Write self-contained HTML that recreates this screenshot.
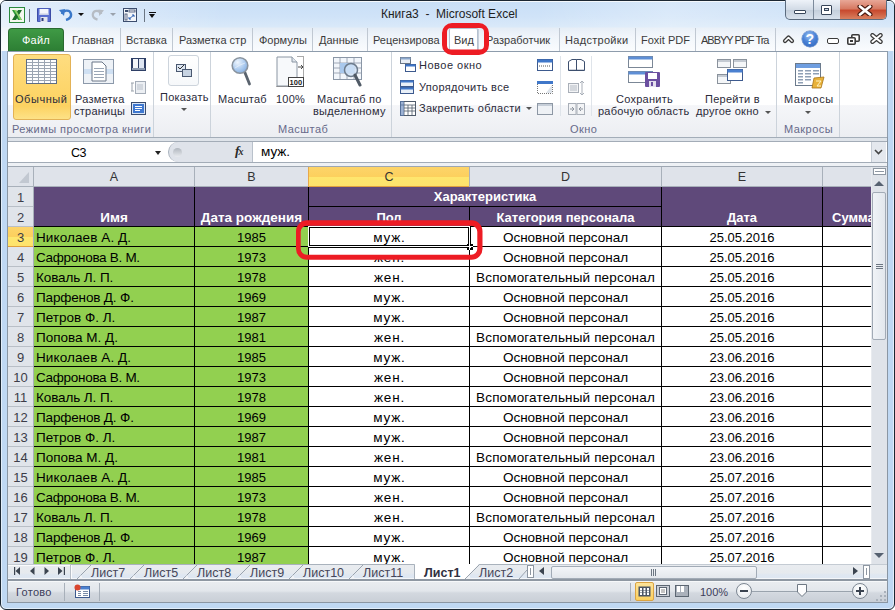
<!DOCTYPE html><html><head><meta charset="utf-8"><style>
*{box-sizing:border-box}
html,body{margin:0;padding:0}
body{width:895px;height:610px;overflow:hidden;position:relative;font-family:"Liberation Sans",sans-serif;background:#fff}
.a{position:absolute}
.t{position:absolute;white-space:nowrap;line-height:1}
#frame{left:0;top:0;width:895px;height:610px;background:#bfd8f3;border:1px solid #1c2733;border-radius:6px 6px 6px 6px;box-shadow:inset 1px 0 0 #e2eefa,inset -1px 0 0 #e2eefa,inset 0 -1px 0 #e2eefa}
#titlebg{left:1px;top:1px;width:893px;height:50px;border-radius:5px 5px 0 0;border-top:1px solid #f4f8fc;background:linear-gradient(90deg,rgba(255,255,255,0.45) 0%,rgba(255,255,255,0) 25%,rgba(255,255,255,0) 60%,rgba(255,255,255,0.25) 75%,rgba(255,255,255,0) 100%),linear-gradient(#c9dff7 0%,#d0e3f8 30%,#d9e9f9 50%,#e5edf6 54%,#eff4fa 70%,#fafcfe 100%)}
.tab{font-size:11px;color:#3b3b3b;top:35px}
.tsep{top:28px;width:1px;height:23px;background:#c0c8d2}
.rb{font-size:11px;letter-spacing:0.25px;color:#2b2b3a}
.glab{font-size:11px;letter-spacing:0.45px;color:#676a8a;top:123.7px}
.gsep{top:52px;width:1px;height:85px;background:#ccd3db}
.c{font-size:13.5px;color:#000;top:0}
.rowh{left:8px;width:25px;height:20px;background:#e0e4ea;border-bottom:1px solid #b9bfc7}
</style></head><body>
<div id="frame" class="a"></div>
<div id="titlebg" class="a"></div>
<div class="t" style="left:381px;top:8px;font-size:12px;color:#1e1e1e">Книга3&nbsp; -&nbsp; Microsoft Excel</div>
<svg class="a" style="left:9px;top:7px" width="17" height="17" viewBox="0 0 17 17">
<rect x="0.5" y="0.5" width="15" height="15" fill="#f4f8ef" stroke="#2b8a3e"/>
<path d="M3 3 L7 3 L13 13 L9 13 Z" fill="#2f9a3a"/><path d="M13 3 L9 3 L3 13 L7 13 Z" fill="#1e6e2a"/>
<path d="M5 3 L7 3 L13 13 L11 13 Z" fill="#8fd16a"/></svg>
<div class="a" style="left:29px;top:9px;width:1px;height:13px;background:#6b7683"></div>
<svg class="a" style="left:37px;top:8px" width="14" height="14" viewBox="0 0 14 14">
<rect x="0" y="0" width="14" height="14" rx="1" fill="#3c4ca6"/><rect x="1" y="0.5" width="12" height="13" fill="#5a6fd0"/><rect x="2.5" y="1" width="9" height="6" fill="#f4f6fb"/><rect x="2.5" y="5.5" width="9" height="1.5" fill="#c9d0e6"/>
<rect x="3.5" y="9" width="7" height="5" fill="#e3e6ee"/><rect x="4.5" y="10" width="2" height="3" fill="#2c3a7a"/></svg>
<svg class="a" style="left:59px;top:8px" width="14" height="13" viewBox="0 0 14 13">
<path d="M3 6 C4 2,11 1,12 6 C12.5 9,10 11,7 12" stroke="#3a78c9" stroke-width="2.4" fill="none"/>
<path d="M0 2 L5 8 L6 1 Z" fill="#3a78c9"/></svg>
<div class="a" style="left:78px;top:13px;width:0;height:0;border-left:3px solid transparent;border-right:3px solid transparent;border-top:3px solid #111"></div>
<svg class="a" style="left:91px;top:8px" width="13" height="13" viewBox="0 0 14 13">
<path d="M11 6 C10 2,3 1,2 6 C1.5 9,4 11,7 12" stroke="#b6bcc4" stroke-width="2.4" fill="none"/>
<path d="M14 2 L9 8 L8 1 Z" fill="#b6bcc4"/></svg>
<div class="a" style="left:110px;top:13px;width:0;height:0;border-left:3px solid transparent;border-right:3px solid transparent;border-top:3px solid #9aa2ac"></div>
<svg class="a" style="left:123px;top:8px" width="14" height="14" viewBox="0 0 14 14">
<rect x="0.5" y="0.5" width="13" height="13" fill="#f3f6fa" stroke="#3c4d6e"/>
<rect x="2" y="2" width="3" height="2" fill="#3c4d6e"/><rect x="6" y="2" width="6" height="2" fill="none" stroke="#3c4d6e" stroke-width="0.8"/>
<rect x="2" y="6" width="2" height="6" fill="none" stroke="#3c4d6e" stroke-width="0.8"/>
<path d="M6 11 L11 7 M9 7 L11 7 L11 9 M6 9 L6 11 L8 11" stroke="#2f62b5" stroke-width="1" fill="none"/></svg>
<div class="a" style="left:144px;top:9px;width:1px;height:13px;background:#6b7683"></div>
<div class="a" style="left:149px;top:12px;width:7px;height:1px;background:#111"></div>
<div class="a" style="left:149px;top:14px;width:0;height:0;border-left:3.5px solid transparent;border-right:3.5px solid transparent;border-top:4px solid #111"></div>
<div class="a" style="left:785px;top:0;width:102px;height:20px;border:1px solid #5b6b7e;border-top:none;border-radius:0 0 5px 5px;overflow:hidden;background:linear-gradient(#eef3f9,#d2dbe6 50%,#c3cedb 51%,#d8e1ec)">
<div class="a" style="left:27px;top:0;width:1px;height:19px;background:#7c8a9b"></div>
<div class="a" style="left:54px;top:0;width:48px;height:19px;background:linear-gradient(#e8a797,#d77a63 45%,#c84a2f 55%,#d9805f)"></div>
</div>
<div class="a" style="left:794px;top:10px;width:12px;height:4px;background:#fff;border:1px solid #38465a;border-radius:1px"></div>
<div class="a" style="left:821px;top:5px;width:11px;height:10px;background:#fff;border:1px solid #38465a;border-radius:1px"></div>
<div class="a" style="left:824px;top:8px;width:5px;height:3px;background:#cfd8e3;border:1px solid #38465a"></div>
<svg class="a" style="left:857px;top:5px" width="16" height="11" viewBox="0 0 16 11"><path d="M3 1.5 L13 9.5 M13 1.5 L3 9.5" stroke="#4a1a10" stroke-width="5" stroke-linecap="round"/><path d="M3 1.5 L13 9.5 M13 1.5 L3 9.5" stroke="#fff" stroke-width="2.8" stroke-linecap="round"/></svg>
<div class="a" style="left:8px;top:28px;width:56px;height:24px;border-radius:4px 4px 0 0;background:linear-gradient(#3f9a45,#2c7d33);border:1px solid #2a6a30;border-bottom:none"></div>
<div class="t" style="left:22px;top:35px;font-size:11px;letter-spacing:0.2px;color:#fff">Файл</div>
<div class="t tab" style="left:72px">Главная</div>
<div class="a tsep" style="left:120px"></div>
<div class="t tab" style="left:126px">Вставка</div>
<div class="a tsep" style="left:172px"></div>
<div class="t tab" style="left:179px">Разметка стр</div>
<div class="a tsep" style="left:252px"></div>
<div class="t tab" style="left:259px">Формулы</div>
<div class="a tsep" style="left:312px"></div>
<div class="t tab" style="left:319px">Данные</div>
<div class="a tsep" style="left:367px"></div>
<div class="t tab" style="left:373px">Рецензирова</div>
<div class="t tab" style="left:454px">Вид</div>
<div class="t tab" style="left:486px">Разработчик</div>
<div class="a tsep" style="left:559px"></div>
<div class="t tab" style="left:565px;letter-spacing:0.3px">Надстройки</div>
<div class="a tsep" style="left:635px"></div>
<div class="t tab" style="left:641px">Foxit PDF</div>
<div class="a tsep" style="left:695px"></div>
<div class="a" style="left:701px;top:30px;width:70px;height:20px;overflow:hidden"><div class="t tab" style="left:0;top:5px;letter-spacing:-1px">ABBYY PDF Tra</div></div>
<div class="a tsep" style="left:775px"></div>
<div class="a" style="left:449px;top:28px;width:29px;height:24px;background:#fff;border:1px solid #b6c2d0;border-bottom:none;border-radius:2px 2px 0 0"></div>
<div class="t tab" style="left:454px">Вид</div>
<div class="a" style="left:478px;top:29px;width:1px;height:22px;background:#c6cfda"></div>
<svg class="a" style="left:782px;top:33px" width="13" height="12" viewBox="0 0 13 12"><path d="M3 8 L6.5 4.5 L10 8" stroke="#3a3a3a" stroke-width="4.2" stroke-linejoin="round" stroke-linecap="round" fill="none"/><path d="M3 8 L6.5 4.5 L10 8" stroke="#fff" stroke-width="1.6" stroke-linejoin="round" stroke-linecap="round" fill="none"/></svg>
<div class="a" style="left:802px;top:31px;width:16px;height:16px;border-radius:50%;background:radial-gradient(circle at 45% 30%,#9cc1f2 0%,#4a82d6 45%,#2f62b8 100%);box-shadow:0 0 0 0.5px #5b7fb8"></div>
<div class="t" style="left:805.5px;top:32px;font-size:14px;font-weight:bold;color:#fff">?</div>
<div class="a" style="left:827px;top:37.5px;width:11.5px;height:6px;border:1.6px solid #3a3a3a;border-radius:2px;background:#fff"></div>
<svg class="a" style="left:847px;top:34px" width="13" height="11" viewBox="0 0 13 11"><rect x="4.8" y="0.8" width="7.4" height="6.4" rx="1" fill="#fff" stroke="#3a3a3a" stroke-width="1.6"/><rect x="0.8" y="3.8" width="7.4" height="6.4" rx="1" fill="#fff" stroke="#3a3a3a" stroke-width="1.6"/><rect x="3" y="6" width="3" height="2" fill="#3a3a3a"/></svg>
<svg class="a" style="left:870px;top:33px" width="13" height="11" viewBox="0 0 13 11"><path d="M2.5 2.2 L10.5 8.8 M10.5 2.2 L2.5 8.8" stroke="#3a3a3a" stroke-width="4.4" stroke-linecap="round"/><path d="M2.5 2.2 L10.5 8.8 M10.5 2.2 L2.5 8.8" stroke="#fff" stroke-width="2" stroke-linecap="round"/></svg>
<div class="a" style="left:7px;top:51px;width:881px;height:87px;border:1px solid #8e9cac;border-bottom-color:#a3adb8;background:linear-gradient(#ffffff 0%,#ffffff 62%,#f5f6f9 63%,#eceef2 100%)"></div>
<div class="a gsep" style="left:153px"></div>
<div class="a gsep" style="left:210px"></div>
<div class="a gsep" style="left:391px"></div>
<div class="a gsep" style="left:776px"></div>
<div class="a gsep" style="left:839px"></div>
<div class="a" style="left:560px;top:56px;width:1px;height:60px;background:#dfe4ea"></div>
<div class="a" style="left:591px;top:56px;width:1px;height:60px;background:#dfe4ea"></div>
<div class="a" style="left:13px;top:54px;width:58px;height:66px;border:1px solid #e3b256;border-radius:3px;background:linear-gradient(#fedd80 0%,#fdd66c 50%,#fcd262 80%,#fde287 100%)"></div>
<svg class="a" style="left:26px;top:59px" width="31" height="25" viewBox="0 0 31 25"><rect x="0" y="0" width="31" height="25" fill="#9ba5b3"/><g fill="#fdfeff"><rect x="1" y="1" width="5" height="2"/><rect x="1" y="4" width="5" height="2"/><rect x="1" y="7" width="5" height="2"/><rect x="1" y="10" width="5" height="2"/><rect x="1" y="13" width="5" height="2"/><rect x="1" y="16" width="5" height="2"/><rect x="1" y="19" width="5" height="2"/><rect x="1" y="22" width="5" height="2"/><rect x="7" y="1" width="5" height="2"/><rect x="7" y="4" width="5" height="2"/><rect x="7" y="7" width="5" height="2"/><rect x="7" y="10" width="5" height="2"/><rect x="7" y="13" width="5" height="2"/><rect x="7" y="16" width="5" height="2"/><rect x="7" y="19" width="5" height="2"/><rect x="7" y="22" width="5" height="2"/><rect x="13" y="1" width="5" height="2"/><rect x="13" y="4" width="5" height="2"/><rect x="13" y="7" width="5" height="2"/><rect x="13" y="10" width="5" height="2"/><rect x="13" y="13" width="5" height="2"/><rect x="13" y="16" width="5" height="2"/><rect x="13" y="19" width="5" height="2"/><rect x="13" y="22" width="5" height="2"/><rect x="19" y="1" width="5" height="2"/><rect x="19" y="4" width="5" height="2"/><rect x="19" y="7" width="5" height="2"/><rect x="19" y="10" width="5" height="2"/><rect x="19" y="13" width="5" height="2"/><rect x="19" y="16" width="5" height="2"/><rect x="19" y="19" width="5" height="2"/><rect x="19" y="22" width="5" height="2"/><rect x="25" y="1" width="5" height="2"/><rect x="25" y="4" width="5" height="2"/><rect x="25" y="7" width="5" height="2"/><rect x="25" y="10" width="5" height="2"/><rect x="25" y="13" width="5" height="2"/><rect x="25" y="16" width="5" height="2"/><rect x="25" y="19" width="5" height="2"/><rect x="25" y="22" width="5" height="2"/></g><rect x="0.5" y="0.5" width="30" height="24" fill="none" stroke="#5d6d84"/></svg>
<div class="t rb" style="left:15px;top:94px;letter-spacing:0.55px">Обычный</div>
<svg class="a" style="left:83px;top:59px" width="31" height="25" viewBox="0 0 31 25"><rect x="0.5" y="0.5" width="30" height="24" fill="#eef2f7" stroke="#8c99aa"/><rect x="1" y="10" width="29" height="5" fill="#cfe0f3"/>
<path d="M9 3 L19 3 L23 7 L23 22 L9 22 Z" fill="#fff" stroke="#6b7788"/><g fill="#9aa6b6"><rect x="11" y="9" width="10" height="1"/><rect x="11" y="12" width="10" height="1"/><rect x="11" y="15" width="10" height="1"/><rect x="11" y="18" width="10" height="1"/></g></svg>
<div class="t rb" style="left:75px;top:94px">Разметка</div>
<div class="t rb" style="left:74px;top:106px">страницы</div>
<svg class="a" style="left:131px;top:58px" width="15" height="13" viewBox="0 0 15 13"><rect x="0" y="0" width="15" height="13" fill="#2e3f66"/><rect x="2" y="1" width="5" height="9" fill="#f4f6fa"/><rect x="8" y="1" width="5" height="9" fill="#dfe6f2"/><rect x="1" y="10" width="13" height="2" fill="#8c9ab0"/></svg>
<svg class="a" style="left:131px;top:79px" width="15" height="16" viewBox="0 0 15 16"><rect x="4.5" y="2.5" width="10" height="12" fill="#eceff3" stroke="#a5adb8"/><rect x="6" y="5" width="6" height="6" fill="#d2d7de"/><path d="M1 4 L1 12 M0 4 L3 4 M0 12 L3 12" stroke="#9aa2ac"/></svg>
<svg class="a" style="left:131px;top:102px" width="15" height="13" viewBox="0 0 15 13"><rect x="0.5" y="0.5" width="14" height="12" fill="#d9e6f6" stroke="#3a4c6e"/><rect x="2" y="2" width="11" height="9" fill="#3f78d0"/><g fill="#fff"><rect x="4" y="4" width="7" height="1"/><rect x="4" y="6" width="7" height="1"/><rect x="4" y="8" width="5" height="1"/></g></svg>
<div class="t glab" style="left:12px">Режимы просмотра книги</div>
<div class="a" style="left:168px;top:55px;width:31px;height:31px;border:1px solid #cdd4dc;border-radius:3px;background:linear-gradient(#fff,#f6f8fa)"></div>
<svg class="a" style="left:176px;top:63px" width="16" height="15" viewBox="0 0 16 15"><rect x="0.5" y="1.5" width="9" height="7" fill="#dde6f2" stroke="#4a5870"/><rect x="6.5" y="6.5" width="9" height="7" fill="#c7d3e2" stroke="#4a5870"/><path d="M2 4 L4 6 L8 2" stroke="#333" fill="none"/></svg>
<div class="t rb" style="left:160px;top:92px">Показать</div>
<div class="a" style="left:181px;top:108px;width:0;height:0;border-left:3px solid transparent;border-right:3px solid transparent;border-top:3px solid #555"></div>
<svg class="a" style="left:230px;top:56px" width="22" height="30" viewBox="0 0 22 30"><defs><radialGradient id="lg" cx="0.35" cy="0.3" r="0.8"><stop offset="0" stop-color="#eef5fd"/><stop offset="0.6" stop-color="#a9c9ee"/><stop offset="1" stop-color="#7ea7dc"/></radialGradient></defs><path d="M14.5 15.5 L19.5 28" stroke="#5a636e" stroke-width="2.8" stroke-linecap="round"/><circle cx="10" cy="9.5" r="7.8" fill="url(#lg)" stroke="#8a949f" stroke-width="1.6"/><path d="M5 12 Q9 9 15 7" stroke="#ffffff" stroke-opacity="0.6" stroke-width="0.8" fill="none"/></svg>
<div class="t rb" style="left:218px;top:94px">Масштаб</div>
<svg class="a" style="left:276px;top:56px" width="29" height="31" viewBox="0 0 29 31"><path d="M1 1 L16 1 L21 6 L21 30 L1 30 Z" fill="#f7f9fb" stroke="#8b96a3"/><path d="M16 1 L16 6 L21 6" fill="#dfe5ec" stroke="#8b96a3"/><path d="M21.5 0.5 H27.5 V30.5 H0.5" stroke="#555" stroke-dasharray="1 1" fill="none"/><path d="M22 11 L27 11 M25 9 L27 11 L25 13" stroke="#333" fill="none" stroke-width="0.9"/><rect x="12.5" y="21.5" width="15" height="9" fill="#fff" stroke="#444"/><text x="13.6" y="29" font-size="7.5" font-weight="bold" font-family="Liberation Sans" fill="#222">100</text></svg>
<div class="t rb" style="left:276px;top:94px">100%</div>
<svg class="a" style="left:333px;top:57px" width="31" height="30" viewBox="0 0 31 30"><rect x="0.5" y="0.5" width="28" height="22" fill="#f2f6fb" stroke="#8a96a6"/><g stroke="#8a96a6" stroke-width="0.8"><path d="M7 1 V22 M14 1 V22 M21 1 V22 M1 6 H28 M1 11 H28 M1 16 H28"/></g><rect x="7" y="6" width="14" height="10" fill="#a9c8ec"/><circle cx="18" cy="13" r="6.5" fill="#cfe2f7" fill-opacity="0.8" stroke="#6d7b8b" stroke-width="1.5"/><path d="M22 18 L27 28" stroke="#505a66" stroke-width="3" stroke-linecap="round"/></svg>
<div class="t rb" style="left:317px;top:94px">Масштаб по</div>
<div class="t rb" style="left:313px;top:106px">выделенному</div>
<div class="t glab" style="left:278px">Масштаб</div>
<svg class="a" style="left:400px;top:57px" width="16" height="15" viewBox="0 0 16 15"><rect x="0.5" y="0.5" width="10" height="6" fill="#e9eef5" stroke="#6a7686"/><rect x="0.5" y="0.5" width="10" height="2" fill="#8aa6cc"/><rect x="5.5" y="7.5" width="10" height="7" fill="#fff" stroke="#3d5a8e"/><rect x="5.5" y="7.5" width="10" height="2" fill="#3f77c9"/></svg>
<div class="t rb" style="left:419px;top:60px;letter-spacing:0.5px">Новое окно</div>
<svg class="a" style="left:400px;top:80px" width="14" height="14" viewBox="0 0 14 14"><rect x="0.5" y="0.5" width="13" height="6" fill="#e9f0f8" stroke="#3d5a8e"/><rect x="0.5" y="0.5" width="13" height="2" fill="#3f77c9"/><rect x="0.5" y="7.5" width="13" height="6" fill="#e9f0f8" stroke="#3d5a8e"/><rect x="0.5" y="7.5" width="13" height="2" fill="#3f77c9"/></svg>
<div class="t rb" style="left:419px;top:82px;letter-spacing:0.3px">Упорядочить все</div>
<svg class="a" style="left:400px;top:101px" width="16" height="15" viewBox="0 0 16 15"><rect x="0.5" y="0.5" width="15" height="14" fill="#fff" stroke="#4f5b6b"/><path d="M4 0 V15 M0 4 H16 M8 4 V15 M12 4 V15 M4 7 H16 M4 10 H16" stroke="#4f5b6b" stroke-width="0.8"/><rect x="0" y="0" width="4" height="15" fill="#5b7fb8" fill-opacity="0.6"/></svg>
<div class="t rb" style="left:419px;top:103px;letter-spacing:0.3px">Закрепить области</div>
<div class="a" style="left:526px;top:107px;width:0;height:0;border-left:3px solid transparent;border-right:3px solid transparent;border-top:3px solid #555"></div>
<svg class="a" style="left:537px;top:59px" width="16" height="12" viewBox="0 0 16 12"><rect x="0.5" y="0.5" width="15" height="11" fill="#fff" stroke="#3d5a8e"/><rect x="0.5" y="0.5" width="15" height="3" fill="#3f77c9"/><path d="M2 7 H14" stroke="#555" stroke-dasharray="1 1"/></svg>
<svg class="a" style="left:537px;top:81px" width="16" height="13" viewBox="0 0 16 13"><rect x="0" y="0" width="16" height="3" fill="#3f77c9"/><path d="M0.5 3 V12.5 H15.5 V3" stroke="#777" stroke-dasharray="1 1" fill="none"/><path d="M9 12 L15 4 L15 12 Z" fill="#dde3ea"/></svg>
<svg class="a" style="left:537px;top:103px" width="16" height="12" viewBox="0 0 16 12"><rect x="0.5" y="0.5" width="15" height="11" fill="#eef1f5" stroke="#8d97a4"/><rect x="1" y="1" width="14" height="2" fill="#c6ced8"/></svg>
<svg class="a" style="left:568px;top:59px" width="17" height="12" viewBox="0 0 17 12"><path d="M0.5 2.5 L4 0.5 L8.5 0.5 L8.5 11.5 L0.5 11.5 Z" fill="#fff" stroke="#3d4f6e"/><path d="M8.5 0.5 L13 0.5 L16.5 2.5 L16.5 11.5 L8.5 11.5 Z" fill="#fff" stroke="#3d4f6e"/><path d="M1 11.5 H16" stroke="#3d4f6e" stroke-width="1.5"/></svg>
<svg class="a" style="left:568px;top:81px" width="17" height="14" viewBox="0 0 17 14"><rect x="0.5" y="2.5" width="10" height="9" fill="#f3f4f6" stroke="#a9afb8"/><path d="M2 5 H9 M2 7 H9 M2 9 H9" stroke="#b5bbc4"/><path d="M14 0 V14 M12 2 L14 0 L16 2 M12 12 L14 14 L16 12" stroke="#a9afb8" fill="none"/></svg>
<svg class="a" style="left:568px;top:103px" width="17" height="12" viewBox="0 0 17 12"><rect x="0.5" y="0.5" width="7.5" height="11" fill="#f3f4f6" stroke="#a9afb8"/><rect x="9" y="0.5" width="7.5" height="11" fill="#f3f4f6" stroke="#a9afb8"/><path d="M2 6 H6 M4 4 L6 6 L4 8 M15 6 H11 M13 4 L11 6 L13 8" stroke="#8d949e" fill="none"/></svg>
<svg class="a" style="left:628px;top:56px" width="33" height="31" viewBox="0 0 33 31"><rect x="0.5" y="0.5" width="24" height="11" fill="#fff" stroke="#7b8796"/><rect x="0.5" y="0.5" width="24" height="3" fill="#5f8fd6"/><rect x="0.5" y="15.5" width="24" height="11" fill="#fff" stroke="#7b8796"/><rect x="0.5" y="15.5" width="24" height="3" fill="#5f8fd6"/><rect x="17" y="16" width="15" height="15" rx="1" fill="#6b4fa0"/><rect x="20" y="17" width="9" height="6" fill="#fff"/><rect x="21" y="25" width="7" height="6" fill="#e4e0ee"/><rect x="23" y="26" width="2" height="4" fill="#6b4fa0"/></svg>
<div class="t rb" style="left:616px;top:94px">Сохранить</div>
<div class="t rb" style="left:598px;top:106px">рабочую область</div>
<svg class="a" style="left:717px;top:59px" width="31" height="26" viewBox="0 0 31 26"><g fill="#f4f6f8" stroke="#8a929c"><rect x="0.5" y="0.5" width="13" height="8"/><rect x="16.5" y="0.5" width="13" height="8"/><rect x="0.5" y="15.5" width="13" height="9"/></g><g fill="#c4cad2"><rect x="1" y="1" width="12" height="2"/><rect x="17" y="1" width="12" height="2"/><rect x="1" y="16" width="12" height="2"/></g><rect x="10.5" y="10.5" width="15" height="11" fill="#fff" stroke="#3d5a8e"/><rect x="10.5" y="10.5" width="15" height="3" fill="#4a80d0"/></svg>
<div class="t rb" style="left:705px;top:94px">Перейти в</div>
<div class="t rb" style="left:696px;top:106px">другое окно</div>
<div class="a" style="left:765px;top:111px;width:0;height:0;border-left:3px solid transparent;border-right:3px solid transparent;border-top:3px solid #555"></div>
<div class="t glab" style="left:570px">Окно</div>
<svg class="a" style="left:795px;top:63px" width="30" height="26" viewBox="0 0 30 26"><rect x="0.5" y="0.5" width="25" height="22" fill="#fff" stroke="#6b7a8c"/><rect x="1" y="1" width="24" height="4" fill="#6f9ee0"/><g fill="#8fa0b5"><rect x="3" y="7" width="5" height="1.5"/><rect x="10" y="7" width="6" height="1.5"/><rect x="18" y="7" width="6" height="1.5"/><rect x="3" y="10" width="5" height="1.5"/><rect x="10" y="10" width="6" height="1.5"/><rect x="18" y="10" width="6" height="1.5"/><rect x="3" y="13" width="5" height="1.5"/><rect x="10" y="13" width="6" height="1.5"/><rect x="3" y="16" width="5" height="1.5"/><rect x="10" y="16" width="6" height="1.5"/><rect x="3" y="19" width="5" height="1.5"/></g><path d="M19 15 L29 14 L26 25 L17 25 Z" fill="#e8b23a" stroke="#a87418" stroke-width="0.8"/><path d="M21 18 L26 18 L22 23 L26 23" stroke="#fff3c4" fill="none"/></svg>
<div class="t rb" style="left:784px;top:94px;letter-spacing:0.55px">Макросы</div>
<div class="a" style="left:805px;top:111px;width:0;height:0;border-left:3px solid transparent;border-right:3px solid transparent;border-top:3px solid #555"></div>
<div class="t glab" style="left:784px">Макросы</div>
<div class="a" style="left:8px;top:138px;width:879px;height:29px;background:#dfe4ea"></div>
<div class="a" style="left:8px;top:141px;width:879px;height:22px;background:#fff;border-top:1px solid #a3acb7;border-bottom:1px solid #a3acb7"></div>
<div class="a" style="left:8px;top:163px;width:879px;height:3px;background:#eef1f5"></div>
<div class="a" style="left:8px;top:166px;width:879px;height:1px;background:#9ea7b2"></div>
<div class="t" style="left:71px;top:147px;font-size:12.5px;letter-spacing:-0.6px;color:#000">C3</div>
<div class="a" style="left:155px;top:151px;width:0;height:0;border-left:3.5px solid transparent;border-right:3.5px solid transparent;border-top:4px solid #222"></div>
<div class="a" style="left:168px;top:142px;width:85px;height:20px;background:#dfe3ea;border-left:1px solid #a9b2bd;border-right:1px solid #b9c1cb;border-radius:10px 0 0 10px"></div>
<div class="a" style="left:173px;top:148px;width:9px;height:9px;border-radius:50%;background:linear-gradient(#b0b6be,#e8ebef)"></div>
<div class="t" style="left:235px;top:144px;font-size:13.5px;font-style:italic;font-weight:bold;font-family:'Liberation Serif',serif;color:#2a2a2a">f<span style="font-size:10px;margin-left:-1px">x</span></div>
<div class="t" style="left:261px;top:145px;font-size:13.5px;color:#000">муж.</div>
<div class="a" style="left:871px;top:142px;width:15px;height:20px;background:#e4e8ee;border-left:1px solid #c5ccd5"></div>
<svg class="a" style="left:874px;top:149px" width="9" height="6" viewBox="0 0 9 6"><path d="M1 1 L4.5 4.5 L8 1" stroke="#444" stroke-width="1.6" fill="none"/></svg>
<div class="a" style="left:8px;top:167px;width:863px;height:397px;background:#fff;overflow:hidden"><div class="a" style="left:0;top:0;width:863px;height:20px;background:#dfe3ea;border-bottom:1px solid #a8b0ba"></div>
<svg class="a" style="left:11px;top:5px" width="10" height="11" viewBox="0 0 10 11"><path d="M10 0 L10 11 L0 11 Z" fill="#c2c8d1"/></svg>
<div class="a" style="left:25px;top:0;width:1px;height:19px;background:#a8b0ba"></div>
<div class="a" style="left:186px;top:0;width:1px;height:19px;background:#a8b0ba"></div>
<div class="a" style="left:300px;top:0;width:1px;height:19px;background:#a8b0ba"></div>
<div class="a" style="left:461px;top:0;width:1px;height:19px;background:#a8b0ba"></div>
<div class="a" style="left:653px;top:0;width:1px;height:19px;background:#a8b0ba"></div>
<div class="a" style="left:814px;top:0;width:1px;height:19px;background:#a8b0ba"></div>
<div class="t" style="left:26px;top:4px;width:160px;text-align:center;font-size:12.5px;color:#333">A</div>
<div class="t" style="left:187px;top:4px;width:113px;text-align:center;font-size:12.5px;color:#333">B</div>
<div class="a" style="left:300px;top:0;width:161px;height:20px;background:linear-gradient(#fdd469 0%,#fcd05e 50%,#fee66e 51%,#fee36c 100%);border-left:1px solid #e7a84a;border-bottom:1px solid #e0a13f"></div>
<div class="t" style="left:301px;top:4px;width:160px;text-align:center;font-size:12.5px;color:#333">C</div>
<div class="t" style="left:462px;top:4px;width:191px;text-align:center;font-size:12.5px;color:#333">D</div>
<div class="t" style="left:654px;top:4px;width:160px;text-align:center;font-size:12.5px;color:#333">E</div>
<div class="t" style="left:815px;top:4px;width:77px;text-align:center;font-size:12.5px;color:#333"></div>
<div class="a rowh" style="left:0;top:20px;"></div>
<div class="t" style="left:0;top:24px;width:25px;text-align:center;font-size:13px;color:#3c3c48">1</div>
<div class="a rowh" style="left:0;top:40px;"></div>
<div class="t" style="left:0;top:44px;width:25px;text-align:center;font-size:13px;color:#3c3c48">2</div>
<div class="a rowh" style="left:0;top:60px;background:linear-gradient(#fdd469 0%,#fcd05e 50%,#fee66e 51%,#fee36c 100%);border-bottom:1px solid #e0a13f;"></div>
<div class="t" style="left:0;top:64px;width:25px;text-align:center;font-size:13px;color:#3c3c48">3</div>
<div class="a rowh" style="left:0;top:80px;"></div>
<div class="t" style="left:0;top:84px;width:25px;text-align:center;font-size:13px;color:#3c3c48">4</div>
<div class="a rowh" style="left:0;top:100px;"></div>
<div class="t" style="left:0;top:104px;width:25px;text-align:center;font-size:13px;color:#3c3c48">5</div>
<div class="a rowh" style="left:0;top:120px;"></div>
<div class="t" style="left:0;top:124px;width:25px;text-align:center;font-size:13px;color:#3c3c48">6</div>
<div class="a rowh" style="left:0;top:140px;"></div>
<div class="t" style="left:0;top:144px;width:25px;text-align:center;font-size:13px;color:#3c3c48">7</div>
<div class="a rowh" style="left:0;top:160px;"></div>
<div class="t" style="left:0;top:164px;width:25px;text-align:center;font-size:13px;color:#3c3c48">8</div>
<div class="a rowh" style="left:0;top:180px;"></div>
<div class="t" style="left:0;top:184px;width:25px;text-align:center;font-size:13px;color:#3c3c48">9</div>
<div class="a rowh" style="left:0;top:200px;"></div>
<div class="t" style="left:0;top:204px;width:25px;text-align:center;font-size:13px;color:#3c3c48">10</div>
<div class="a rowh" style="left:0;top:220px;"></div>
<div class="t" style="left:0;top:224px;width:25px;text-align:center;font-size:13px;color:#3c3c48">11</div>
<div class="a rowh" style="left:0;top:240px;"></div>
<div class="t" style="left:0;top:244px;width:25px;text-align:center;font-size:13px;color:#3c3c48">12</div>
<div class="a rowh" style="left:0;top:260px;"></div>
<div class="t" style="left:0;top:264px;width:25px;text-align:center;font-size:13px;color:#3c3c48">13</div>
<div class="a rowh" style="left:0;top:280px;"></div>
<div class="t" style="left:0;top:284px;width:25px;text-align:center;font-size:13px;color:#3c3c48">14</div>
<div class="a rowh" style="left:0;top:300px;"></div>
<div class="t" style="left:0;top:304px;width:25px;text-align:center;font-size:13px;color:#3c3c48">15</div>
<div class="a rowh" style="left:0;top:320px;"></div>
<div class="t" style="left:0;top:324px;width:25px;text-align:center;font-size:13px;color:#3c3c48">16</div>
<div class="a rowh" style="left:0;top:340px;"></div>
<div class="t" style="left:0;top:344px;width:25px;text-align:center;font-size:13px;color:#3c3c48">17</div>
<div class="a rowh" style="left:0;top:360px;"></div>
<div class="t" style="left:0;top:364px;width:25px;text-align:center;font-size:13px;color:#3c3c48">18</div>
<div class="a rowh" style="left:0;top:380px;"></div>
<div class="t" style="left:0;top:384px;width:25px;text-align:center;font-size:13px;color:#3c3c48">19</div>
<div class="a rowh" style="left:0;top:400px;"></div>
<div class="t" style="left:0;top:404px;width:25px;text-align:center;font-size:13px;color:#3c3c48">20</div>
<div class="a" style="left:25px;top:20px;width:1px;height:400px;background:#a8b0ba"></div>
<div class="a" style="left:26px;top:20px;width:900px;height:40px;background:#5f497a"></div>
<div class="a" style="left:26px;top:60px;width:274px;height:400px;background:#92d050"></div>
<div class="a" style="left:186px;top:20px;width:1px;height:413px;background:#000"></div>
<div class="a" style="left:300px;top:20px;width:1px;height:413px;background:#000"></div>
<div class="a" style="left:461px;top:40px;width:1px;height:393px;background:#000"></div>
<div class="a" style="left:653px;top:20px;width:1px;height:413px;background:#000"></div>
<div class="a" style="left:814px;top:20px;width:1px;height:413px;background:#000"></div>
<div class="a" style="left:300px;top:39px;width:353px;height:1px;background:#000"></div>
<div class="a" style="left:26px;top:59px;width:866px;height:1px;background:#000"></div>
<div class="a" style="left:26px;top:79px;width:866px;height:1px;background:#000"></div>
<div class="a" style="left:26px;top:99px;width:866px;height:1px;background:#000"></div>
<div class="a" style="left:26px;top:119px;width:866px;height:1px;background:#000"></div>
<div class="a" style="left:26px;top:139px;width:866px;height:1px;background:#000"></div>
<div class="a" style="left:26px;top:159px;width:866px;height:1px;background:#000"></div>
<div class="a" style="left:26px;top:179px;width:866px;height:1px;background:#000"></div>
<div class="a" style="left:26px;top:199px;width:866px;height:1px;background:#000"></div>
<div class="a" style="left:26px;top:219px;width:866px;height:1px;background:#000"></div>
<div class="a" style="left:26px;top:239px;width:866px;height:1px;background:#000"></div>
<div class="a" style="left:26px;top:259px;width:866px;height:1px;background:#000"></div>
<div class="a" style="left:26px;top:279px;width:866px;height:1px;background:#000"></div>
<div class="a" style="left:26px;top:299px;width:866px;height:1px;background:#000"></div>
<div class="a" style="left:26px;top:319px;width:866px;height:1px;background:#000"></div>
<div class="a" style="left:26px;top:339px;width:866px;height:1px;background:#000"></div>
<div class="a" style="left:26px;top:359px;width:866px;height:1px;background:#000"></div>
<div class="a" style="left:26px;top:379px;width:866px;height:1px;background:#000"></div>
<div class="a" style="left:26px;top:399px;width:866px;height:1px;background:#000"></div>
<div class="a" style="left:26px;top:419px;width:866px;height:1px;background:#000"></div>
<div class="t" style="left:26px;top:44px;width:160px;text-align:center;font-size:13.5px;font-weight:bold;color:#fff">Имя</div>
<div class="t" style="left:187px;top:44px;width:113px;text-align:center;font-size:13.5px;font-weight:bold;color:#fff">Дата рождения</div>
<div class="t" style="left:301px;top:23px;width:352px;text-align:center;font-size:13px;font-weight:bold;color:#fff">Характеристика</div>
<div class="t" style="left:301px;top:44px;width:160px;text-align:center;font-size:13px;font-weight:bold;color:#fff">Пол</div>
<div class="t" style="left:462px;top:44px;width:191px;text-align:center;font-size:13px;font-weight:bold;color:#fff">Категория персонала</div>
<div class="t" style="left:654px;top:44px;width:160px;text-align:center;font-size:13px;font-weight:bold;color:#fff">Дата</div>
<div class="t" style="left:824px;top:44px;font-size:13px;font-weight:bold;color:#fff">Сумма</div>
<div class="t" style="left:28px;top:64px;font-size:13.5px;letter-spacing:0.1px;color:#000">Николаев А. Д.</div>
<div class="t" style="left:187px;top:64px;width:113px;text-align:center;font-size:13px;color:#000">1985</div>
<div class="t" style="left:301px;top:64px;width:161px;text-align:center;font-size:13.5px;letter-spacing:0.8px;color:#000">муж.</div>
<div class="t" style="left:462px;top:64px;width:191px;text-align:center;font-size:13.5px;letter-spacing:0;color:#000">Основной персонал</div>
<div class="t" style="left:654px;top:64px;width:160px;text-align:center;font-size:13px;color:#000">25.05.2016</div>
<div class="t" style="left:28px;top:84px;font-size:13.5px;letter-spacing:-0.3px;color:#000">Сафронова В. М.</div>
<div class="t" style="left:187px;top:84px;width:113px;text-align:center;font-size:13px;color:#000">1973</div>
<div class="t" style="left:301px;top:84px;width:161px;text-align:center;font-size:13.5px;letter-spacing:0.8px;color:#000">жен.</div>
<div class="t" style="left:462px;top:84px;width:191px;text-align:center;font-size:13.5px;letter-spacing:0;color:#000">Основной персонал</div>
<div class="t" style="left:654px;top:84px;width:160px;text-align:center;font-size:13px;color:#000">25.05.2016</div>
<div class="t" style="left:28px;top:104px;font-size:13.5px;letter-spacing:-0.1px;color:#000">Коваль Л. П.</div>
<div class="t" style="left:187px;top:104px;width:113px;text-align:center;font-size:13px;color:#000">1978</div>
<div class="t" style="left:301px;top:104px;width:161px;text-align:center;font-size:13.5px;letter-spacing:0.8px;color:#000">жен.</div>
<div class="t" style="left:462px;top:104px;width:191px;text-align:center;font-size:13.5px;letter-spacing:0.15px;color:#000">Вспомогательный персонал</div>
<div class="t" style="left:654px;top:104px;width:160px;text-align:center;font-size:13px;color:#000">25.05.2016</div>
<div class="t" style="left:28px;top:124px;font-size:13.5px;letter-spacing:-0.15px;color:#000">Парфенов Д. Ф.</div>
<div class="t" style="left:187px;top:124px;width:113px;text-align:center;font-size:13px;color:#000">1969</div>
<div class="t" style="left:301px;top:124px;width:161px;text-align:center;font-size:13.5px;letter-spacing:0.8px;color:#000">муж.</div>
<div class="t" style="left:462px;top:124px;width:191px;text-align:center;font-size:13.5px;letter-spacing:0;color:#000">Основной персонал</div>
<div class="t" style="left:654px;top:124px;width:160px;text-align:center;font-size:13px;color:#000">25.05.2016</div>
<div class="t" style="left:28px;top:144px;font-size:13.5px;letter-spacing:0px;color:#000">Петров Ф. Л.</div>
<div class="t" style="left:187px;top:144px;width:113px;text-align:center;font-size:13px;color:#000">1987</div>
<div class="t" style="left:301px;top:144px;width:161px;text-align:center;font-size:13.5px;letter-spacing:0.8px;color:#000">муж.</div>
<div class="t" style="left:462px;top:144px;width:191px;text-align:center;font-size:13.5px;letter-spacing:0;color:#000">Основной персонал</div>
<div class="t" style="left:654px;top:144px;width:160px;text-align:center;font-size:13px;color:#000">25.05.2016</div>
<div class="t" style="left:28px;top:164px;font-size:13.5px;letter-spacing:0px;color:#000">Попова М. Д.</div>
<div class="t" style="left:187px;top:164px;width:113px;text-align:center;font-size:13px;color:#000">1981</div>
<div class="t" style="left:301px;top:164px;width:161px;text-align:center;font-size:13.5px;letter-spacing:0.8px;color:#000">жен.</div>
<div class="t" style="left:462px;top:164px;width:191px;text-align:center;font-size:13.5px;letter-spacing:0.15px;color:#000">Вспомогательный персонал</div>
<div class="t" style="left:654px;top:164px;width:160px;text-align:center;font-size:13px;color:#000">25.05.2016</div>
<div class="t" style="left:28px;top:184px;font-size:13.5px;letter-spacing:0.1px;color:#000">Николаев А. Д.</div>
<div class="t" style="left:187px;top:184px;width:113px;text-align:center;font-size:13px;color:#000">1985</div>
<div class="t" style="left:301px;top:184px;width:161px;text-align:center;font-size:13.5px;letter-spacing:0.8px;color:#000">муж.</div>
<div class="t" style="left:462px;top:184px;width:191px;text-align:center;font-size:13.5px;letter-spacing:0;color:#000">Основной персонал</div>
<div class="t" style="left:654px;top:184px;width:160px;text-align:center;font-size:13px;color:#000">23.06.2016</div>
<div class="t" style="left:28px;top:204px;font-size:13.5px;letter-spacing:-0.3px;color:#000">Сафронова В. М.</div>
<div class="t" style="left:187px;top:204px;width:113px;text-align:center;font-size:13px;color:#000">1973</div>
<div class="t" style="left:301px;top:204px;width:161px;text-align:center;font-size:13.5px;letter-spacing:0.8px;color:#000">жен.</div>
<div class="t" style="left:462px;top:204px;width:191px;text-align:center;font-size:13.5px;letter-spacing:0;color:#000">Основной персонал</div>
<div class="t" style="left:654px;top:204px;width:160px;text-align:center;font-size:13px;color:#000">23.06.2016</div>
<div class="t" style="left:28px;top:224px;font-size:13.5px;letter-spacing:-0.1px;color:#000">Коваль Л. П.</div>
<div class="t" style="left:187px;top:224px;width:113px;text-align:center;font-size:13px;color:#000">1978</div>
<div class="t" style="left:301px;top:224px;width:161px;text-align:center;font-size:13.5px;letter-spacing:0.8px;color:#000">жен.</div>
<div class="t" style="left:462px;top:224px;width:191px;text-align:center;font-size:13.5px;letter-spacing:0.15px;color:#000">Вспомогательный персонал</div>
<div class="t" style="left:654px;top:224px;width:160px;text-align:center;font-size:13px;color:#000">23.06.2016</div>
<div class="t" style="left:28px;top:244px;font-size:13.5px;letter-spacing:-0.15px;color:#000">Парфенов Д. Ф.</div>
<div class="t" style="left:187px;top:244px;width:113px;text-align:center;font-size:13px;color:#000">1969</div>
<div class="t" style="left:301px;top:244px;width:161px;text-align:center;font-size:13.5px;letter-spacing:0.8px;color:#000">муж.</div>
<div class="t" style="left:462px;top:244px;width:191px;text-align:center;font-size:13.5px;letter-spacing:0;color:#000">Основной персонал</div>
<div class="t" style="left:654px;top:244px;width:160px;text-align:center;font-size:13px;color:#000">23.06.2016</div>
<div class="t" style="left:28px;top:264px;font-size:13.5px;letter-spacing:0px;color:#000">Петров Ф. Л.</div>
<div class="t" style="left:187px;top:264px;width:113px;text-align:center;font-size:13px;color:#000">1987</div>
<div class="t" style="left:301px;top:264px;width:161px;text-align:center;font-size:13.5px;letter-spacing:0.8px;color:#000">муж.</div>
<div class="t" style="left:462px;top:264px;width:191px;text-align:center;font-size:13.5px;letter-spacing:0;color:#000">Основной персонал</div>
<div class="t" style="left:654px;top:264px;width:160px;text-align:center;font-size:13px;color:#000">23.06.2016</div>
<div class="t" style="left:28px;top:284px;font-size:13.5px;letter-spacing:0px;color:#000">Попова М. Д.</div>
<div class="t" style="left:187px;top:284px;width:113px;text-align:center;font-size:13px;color:#000">1981</div>
<div class="t" style="left:301px;top:284px;width:161px;text-align:center;font-size:13.5px;letter-spacing:0.8px;color:#000">жен.</div>
<div class="t" style="left:462px;top:284px;width:191px;text-align:center;font-size:13.5px;letter-spacing:0.15px;color:#000">Вспомогательный персонал</div>
<div class="t" style="left:654px;top:284px;width:160px;text-align:center;font-size:13px;color:#000">23.06.2016</div>
<div class="t" style="left:28px;top:304px;font-size:13.5px;letter-spacing:0.1px;color:#000">Николаев А. Д.</div>
<div class="t" style="left:187px;top:304px;width:113px;text-align:center;font-size:13px;color:#000">1985</div>
<div class="t" style="left:301px;top:304px;width:161px;text-align:center;font-size:13.5px;letter-spacing:0.8px;color:#000">муж.</div>
<div class="t" style="left:462px;top:304px;width:191px;text-align:center;font-size:13.5px;letter-spacing:0;color:#000">Основной персонал</div>
<div class="t" style="left:654px;top:304px;width:160px;text-align:center;font-size:13px;color:#000">25.07.2016</div>
<div class="t" style="left:28px;top:324px;font-size:13.5px;letter-spacing:-0.3px;color:#000">Сафронова В. М.</div>
<div class="t" style="left:187px;top:324px;width:113px;text-align:center;font-size:13px;color:#000">1973</div>
<div class="t" style="left:301px;top:324px;width:161px;text-align:center;font-size:13.5px;letter-spacing:0.8px;color:#000">жен.</div>
<div class="t" style="left:462px;top:324px;width:191px;text-align:center;font-size:13.5px;letter-spacing:0;color:#000">Основной персонал</div>
<div class="t" style="left:654px;top:324px;width:160px;text-align:center;font-size:13px;color:#000">25.07.2016</div>
<div class="t" style="left:28px;top:344px;font-size:13.5px;letter-spacing:-0.1px;color:#000">Коваль Л. П.</div>
<div class="t" style="left:187px;top:344px;width:113px;text-align:center;font-size:13px;color:#000">1978</div>
<div class="t" style="left:301px;top:344px;width:161px;text-align:center;font-size:13.5px;letter-spacing:0.8px;color:#000">жен.</div>
<div class="t" style="left:462px;top:344px;width:191px;text-align:center;font-size:13.5px;letter-spacing:0.15px;color:#000">Вспомогательный персонал</div>
<div class="t" style="left:654px;top:344px;width:160px;text-align:center;font-size:13px;color:#000">25.07.2016</div>
<div class="t" style="left:28px;top:364px;font-size:13.5px;letter-spacing:-0.15px;color:#000">Парфенов Д. Ф.</div>
<div class="t" style="left:187px;top:364px;width:113px;text-align:center;font-size:13px;color:#000">1969</div>
<div class="t" style="left:301px;top:364px;width:161px;text-align:center;font-size:13.5px;letter-spacing:0.8px;color:#000">муж.</div>
<div class="t" style="left:462px;top:364px;width:191px;text-align:center;font-size:13.5px;letter-spacing:0;color:#000">Основной персонал</div>
<div class="t" style="left:654px;top:364px;width:160px;text-align:center;font-size:13px;color:#000">25.07.2016</div>
<div class="t" style="left:28px;top:384px;font-size:13.5px;letter-spacing:0px;color:#000">Петров Ф. Л.</div>
<div class="t" style="left:187px;top:384px;width:113px;text-align:center;font-size:13px;color:#000">1987</div>
<div class="t" style="left:301px;top:384px;width:161px;text-align:center;font-size:13.5px;letter-spacing:0.8px;color:#000">муж.</div>
<div class="t" style="left:462px;top:384px;width:191px;text-align:center;font-size:13.5px;letter-spacing:0;color:#000">Основной персонал</div>
<div class="t" style="left:654px;top:384px;width:160px;text-align:center;font-size:13px;color:#000">25.07.2016</div>
<div class="a" style="left:300px;top:59px;width:163px;height:1px;background:#fff"></div>
<div class="a" style="left:300px;top:59px;width:1px;height:22px;background:#fff"></div>
<div class="a" style="left:301px;top:60px;width:160px;height:19px;border:1px solid #000"></div>
<div class="a" style="left:461px;top:59px;width:1px;height:21px;background:#fff"></div>
<div class="a" style="left:300px;top:79px;width:162px;height:1px;background:#fff"></div>
<div class="a" style="left:462px;top:59px;width:1px;height:22px;background:#000"></div>
<div class="a" style="left:300px;top:80px;width:163px;height:1px;background:#000"></div>
<svg class="a" style="left:459px;top:77px" width="6" height="6" viewBox="0 0 6 6"><rect x="0" y="0" width="6" height="6" fill="#000"/><rect x="2" y="0" width="1" height="6" fill="#fff"/><rect x="0" y="2" width="6" height="1" fill="#fff"/><rect x="2" y="2" width="2" height="2" fill="#fff"/></svg></div>
<div class="a" style="left:871px;top:167px;width:16px;height:397px;background:#dfe3e9;border-left:1px solid #e8ebef"></div>
<div class="a" style="left:873px;top:168px;width:13px;height:7px;background:#fff;border:1px solid #8e97a2"></div>
<div class="a" style="left:875px;top:171px;width:9px;height:1px;background:#8e97a2"></div>
<div class="a" style="left:874px;top:181px;width:0;height:0;border-left:5px solid transparent;border-right:5px solid transparent;border-bottom:5px solid #566170"></div>
<div class="a" style="left:872px;top:192px;width:14px;height:148px;border:1px solid #a2abb6;border-radius:2px;background:linear-gradient(90deg,#f0f3f7,#e2e7ed)"></div>
<div class="a" style="left:876px;top:264px;width:7px;height:1px;background:#6c7682"></div>
<div class="a" style="left:876px;top:266px;width:7px;height:1px;background:#6c7682"></div>
<div class="a" style="left:876px;top:268px;width:7px;height:1px;background:#6c7682"></div>
<div class="a" style="left:874px;top:553px;width:0;height:0;border-left:5px solid transparent;border-right:5px solid transparent;border-top:5px solid #566170"></div>
<div class="a" style="left:8px;top:564px;width:879px;height:18px;background:linear-gradient(#e9ecf0 0%,#e6eaee 50%,#dfe7f1 60%,#dde7f3 100%)"></div>
<div class="a" style="left:8px;top:564px;width:879px;height:1px;background:#c4cbd3"></div>
<div class="a" style="left:8px;top:565px;width:63px;height:1px;background:#fafbfc"></div>
<div class="a" style="left:8px;top:578px;width:879px;height:1px;background:#f4f6f9"></div>
<div class="a" style="left:8px;top:579px;width:879px;height:2px;background:#8e97a2"></div>
<div class="a" style="left:8px;top:581px;width:879px;height:1px;background:#f6f8fa"></div>
<svg class="a" style="left:14px;top:567px" width="7" height="8" viewBox="0 0 7 8"><rect x="0" y="0" width="1.2" height="8" fill="#3b4450"/><path d="M6 0 L1.5 4 L6 8 Z" fill="#3b4450"/></svg>
<svg class="a" style="left:30px;top:567px" width="5" height="8" viewBox="0 0 5 8"><path d="M4.5 0 L0 4 L4.5 8 Z" fill="#3b4450"/></svg>
<svg class="a" style="left:44px;top:567px" width="5" height="8" viewBox="0 0 5 8"><path d="M0.5 0 L5 4 L0.5 8 Z" fill="#3b4450"/></svg>
<svg class="a" style="left:58px;top:567px" width="7" height="8" viewBox="0 0 7 8"><rect x="5.8" y="0" width="1.2" height="8" fill="#3b4450"/><path d="M0 0 L4.5 4 L0 8 Z" fill="#3b4450"/></svg>
<div class="a" style="left:70px;top:564px;width:1px;height:15px;background:#b8bfc8"></div>
<div class="a" style="left:71px;top:565px;width:1px;height:14px;background:#fbfcfd"></div>
<svg class="a" style="left:0;top:564px" width="540" height="17" viewBox="0 0 540 17"><path d="M414.5 0 L414.5 15 L465 15 L479 0 Z" fill="#fff"/><path d="M71 0.5 H414.5 V15 M479 0.5 H527" stroke="#a9b2bc" fill="none"/><path d="M77 15 L91 1" stroke="#9aa3ae" stroke-width="1"/><path d="M78 15 L81 11 L83 15 Z" fill="#f2f4f7"/><path d="M130 15 L144 1" stroke="#9aa3ae" stroke-width="1"/><path d="M131 15 L134 11 L136 15 Z" fill="#f2f4f7"/><path d="M183 15 L197 1" stroke="#9aa3ae" stroke-width="1"/><path d="M184 15 L187 11 L189 15 Z" fill="#f2f4f7"/><path d="M236 15 L250 1" stroke="#9aa3ae" stroke-width="1"/><path d="M237 15 L240 11 L242 15 Z" fill="#f2f4f7"/><path d="M289 15 L303 1" stroke="#9aa3ae" stroke-width="1"/><path d="M290 15 L293 11 L295 15 Z" fill="#f2f4f7"/><path d="M349 15 L363 1" stroke="#9aa3ae" stroke-width="1"/><path d="M350 15 L353 11 L355 15 Z" fill="#f2f4f7"/><path d="M465 15 L479 1" stroke="#9aa3ae" stroke-width="1"/><path d="M466 15 L469 11 L471 15 Z" fill="#f2f4f7"/><path d="M465 15 L479 1" stroke="#9aa3ae"/><path d="M519 15 L527 6" stroke="#9aa3ae"/></svg>
<div class="t" style="left:91px;top:567px;font-size:12.5px;color:#45465a">Лист7</div>
<div class="t" style="left:144px;top:567px;font-size:12.5px;color:#45465a">Лист5</div>
<div class="t" style="left:197px;top:567px;font-size:12.5px;color:#45465a">Лист8</div>
<div class="t" style="left:250px;top:567px;font-size:12.5px;color:#45465a">Лист9</div>
<div class="t" style="left:303px;top:567px;font-size:12.5px;color:#45465a">Лист10</div>
<div class="t" style="left:363px;top:567px;font-size:12.5px;color:#45465a">Лист11</div>
<div class="t" style="left:424px;top:567px;font-size:12.5px;font-weight:bold;color:#303040">Лист1</div>
<div class="t" style="left:479px;top:567px;font-size:12.5px;color:#45465a">Лист2</div>
<div class="a" style="left:527px;top:565px;width:7px;height:13px;background:#fff;border:1px solid #8e97a2"></div>
<div class="a" style="left:530px;top:568px;width:1px;height:7px;background:#8e97a2"></div>
<div class="a" style="left:539px;top:567px;width:0;height:0;border-top:4px solid transparent;border-bottom:4px solid transparent;border-right:5px solid #3b4450"></div>
<div class="a" style="left:551px;top:566px;width:206px;height:13px;border:1px solid #a2abb6;border-radius:2px;background:linear-gradient(#f3f5f8,#e3e7ec)"></div>
<div class="a" style="left:651px;top:569px;width:1px;height:7px;background:#6c7682"></div>
<div class="a" style="left:653px;top:569px;width:1px;height:7px;background:#6c7682"></div>
<div class="a" style="left:655px;top:569px;width:1px;height:7px;background:#6c7682"></div>
<div class="a" style="left:853px;top:567px;width:0;height:0;border-top:4px solid transparent;border-bottom:4px solid transparent;border-left:5px solid #3b4450"></div>
<div class="a" style="left:863px;top:565px;width:7px;height:14px;background:#fff;border:1px solid #8e97a2"></div>
<div class="a" style="left:866px;top:568px;width:1px;height:7px;background:#8e97a2"></div>
<div class="a" style="left:8px;top:582px;width:879px;height:20px;background:linear-gradient(#e9ecf0 0%,#e2e6eb 45%,#d3d8df 55%,#c9cfd7 100%)"></div>
<div class="t" style="left:16px;top:587px;font-size:11px;letter-spacing:0.3px;color:#3c3c5a">Готово</div>
<div class="a" style="left:64px;top:583px;width:1px;height:18px;background:#a8b0ba"></div>
<svg class="a" style="left:74px;top:584px" width="16" height="14" viewBox="0 0 16 14"><rect x="1.5" y="2.5" width="14" height="11" fill="#fff" stroke="#3d5a8e"/><rect x="1.5" y="2.5" width="14" height="3" fill="#4a80d0"/><g fill="#7a8ca8"><rect x="4" y="7" width="3" height="1"/><rect x="9" y="7" width="5" height="1"/><rect x="4" y="9" width="3" height="1"/><rect x="9" y="9" width="5" height="1"/><rect x="4" y="11" width="3" height="1"/><rect x="9" y="11" width="5" height="1"/></g><circle cx="3.5" cy="3.5" r="3" fill="#d9452e"/></svg>
<div class="a" style="left:99px;top:583px;width:1px;height:18px;background:#a8b0ba"></div>
<div class="a" style="left:630px;top:583px;width:1px;height:18px;background:#a8b0ba"></div>
<div class="a" style="left:635px;top:582px;width:19px;height:19px;border:1px solid #dca442;border-radius:2px;background:linear-gradient(#fde49a,#fbd05e)"></div>
<svg class="a" style="left:638px;top:586px" width="13" height="11" viewBox="0 0 13 11"><rect x="0.5" y="0.5" width="12" height="10" fill="#4c5664"/><g fill="#fff"><rect x="2" y="2" width="2" height="2"/><rect x="5.5" y="2" width="2" height="2"/><rect x="9" y="2" width="2" height="2"/><rect x="2" y="4.5" width="2" height="2"/><rect x="5.5" y="4.5" width="2" height="2"/><rect x="9" y="4.5" width="2" height="2"/><rect x="2" y="7" width="2" height="2"/><rect x="5.5" y="7" width="2" height="2"/><rect x="9" y="7" width="2" height="2"/></g></svg>
<svg class="a" style="left:656px;top:585px" width="14" height="12" viewBox="0 0 14 12"><rect x="0.5" y="0.5" width="13" height="11" fill="#c9ced6" stroke="#5c6672"/><rect x="3.5" y="2.5" width="7" height="7" fill="#fff" stroke="#5c6672"/><path d="M5 5 H9 M5 7 H9" stroke="#888"/></svg>
<svg class="a" style="left:675px;top:585px" width="14" height="12" viewBox="0 0 14 12"><rect x="0.5" y="0.5" width="13" height="11" fill="#aab1bb" stroke="#5c6672"/><rect x="2" y="1" width="3" height="6" fill="#fff"/><rect x="6" y="1" width="3" height="6" fill="#fff"/></svg>
<div class="t" style="left:700px;top:587px;font-size:11px;color:#3c3c5a">100%</div>
<div class="a" style="left:736px;top:583px;width:16px;height:16px;border-radius:50%;border:1px solid #7d8793;background:radial-gradient(circle at 50% 30%,#fff,#e3e7ec)"></div>
<div class="a" style="left:740px;top:590px;width:8px;height:2px;background:#3a4350"></div>
<div class="a" style="left:752px;top:591px;width:100px;height:1px;background:#9aa3ad"></div>
<svg class="a" style="left:797px;top:584px" width="10" height="13" viewBox="0 0 10 13"><path d="M0.5 0.5 H9.5 V8 L5 12.5 L0.5 8 Z" fill="#fdfdfe" stroke="#6e7884"/></svg>
<div class="a" style="left:852px;top:583px;width:16px;height:16px;border-radius:50%;border:1px solid #7d8793;background:radial-gradient(circle at 50% 30%,#fff,#e3e7ec)"></div>
<div class="a" style="left:856px;top:590px;width:8px;height:2px;background:#3a4350"></div>
<div class="a" style="left:859px;top:587px;width:2px;height:8px;background:#3a4350"></div>
<div class="a" style="left:884px;top:591px;width:2px;height:2px;background:#a9b1bb"></div>
<div class="a" style="left:880px;top:595px;width:2px;height:2px;background:#a9b1bb"></div>
<div class="a" style="left:884px;top:595px;width:2px;height:2px;background:#a9b1bb"></div>
<div class="a" style="left:876px;top:599px;width:2px;height:2px;background:#a9b1bb"></div>
<div class="a" style="left:880px;top:599px;width:2px;height:2px;background:#a9b1bb"></div>
<div class="a" style="left:884px;top:599px;width:2px;height:2px;background:#a9b1bb"></div>
<div class="a" style="left:7px;top:137px;width:881px;height:466px;border:1px solid #8a96a3;border-top:none"></div>
<svg class="a" style="left:0;top:0" width="895" height="610" viewBox="0 0 895 610"><path fill="#ed1c24" fill-rule="evenodd" d="M452 23 H479 A10 10 0 0 1 489 33 V45 A10 10 0 0 1 479 55 H452 A10 10 0 0 1 442 45 V33 A10 10 0 0 1 452 23 Z M451 28 H480 A4 4 0 0 1 484 32 V45.5 A4 4 0 0 1 480 49.5 H451 A4 4 0 0 1 447 45.5 V32 A4 4 0 0 1 451 28 Z"/><path fill="#ed1c24" fill-rule="evenodd" d="M307 220.3 H471.5 A11 11 0 0 1 482.5 231.3 V248.7 A11 11 0 0 1 471.5 259.7 H307 A11 11 0 0 1 296 248.7 V231.3 A11 11 0 0 1 307 220.3 Z M306.7 225.7 H471.3 A6 6 0 0 1 477.3 231.7 V248.8 A6 6 0 0 1 471.3 254.8 H306.7 A6 6 0 0 1 300.7 248.8 V231.7 A6 6 0 0 1 306.7 225.7 Z"/></svg>
</body></html>
